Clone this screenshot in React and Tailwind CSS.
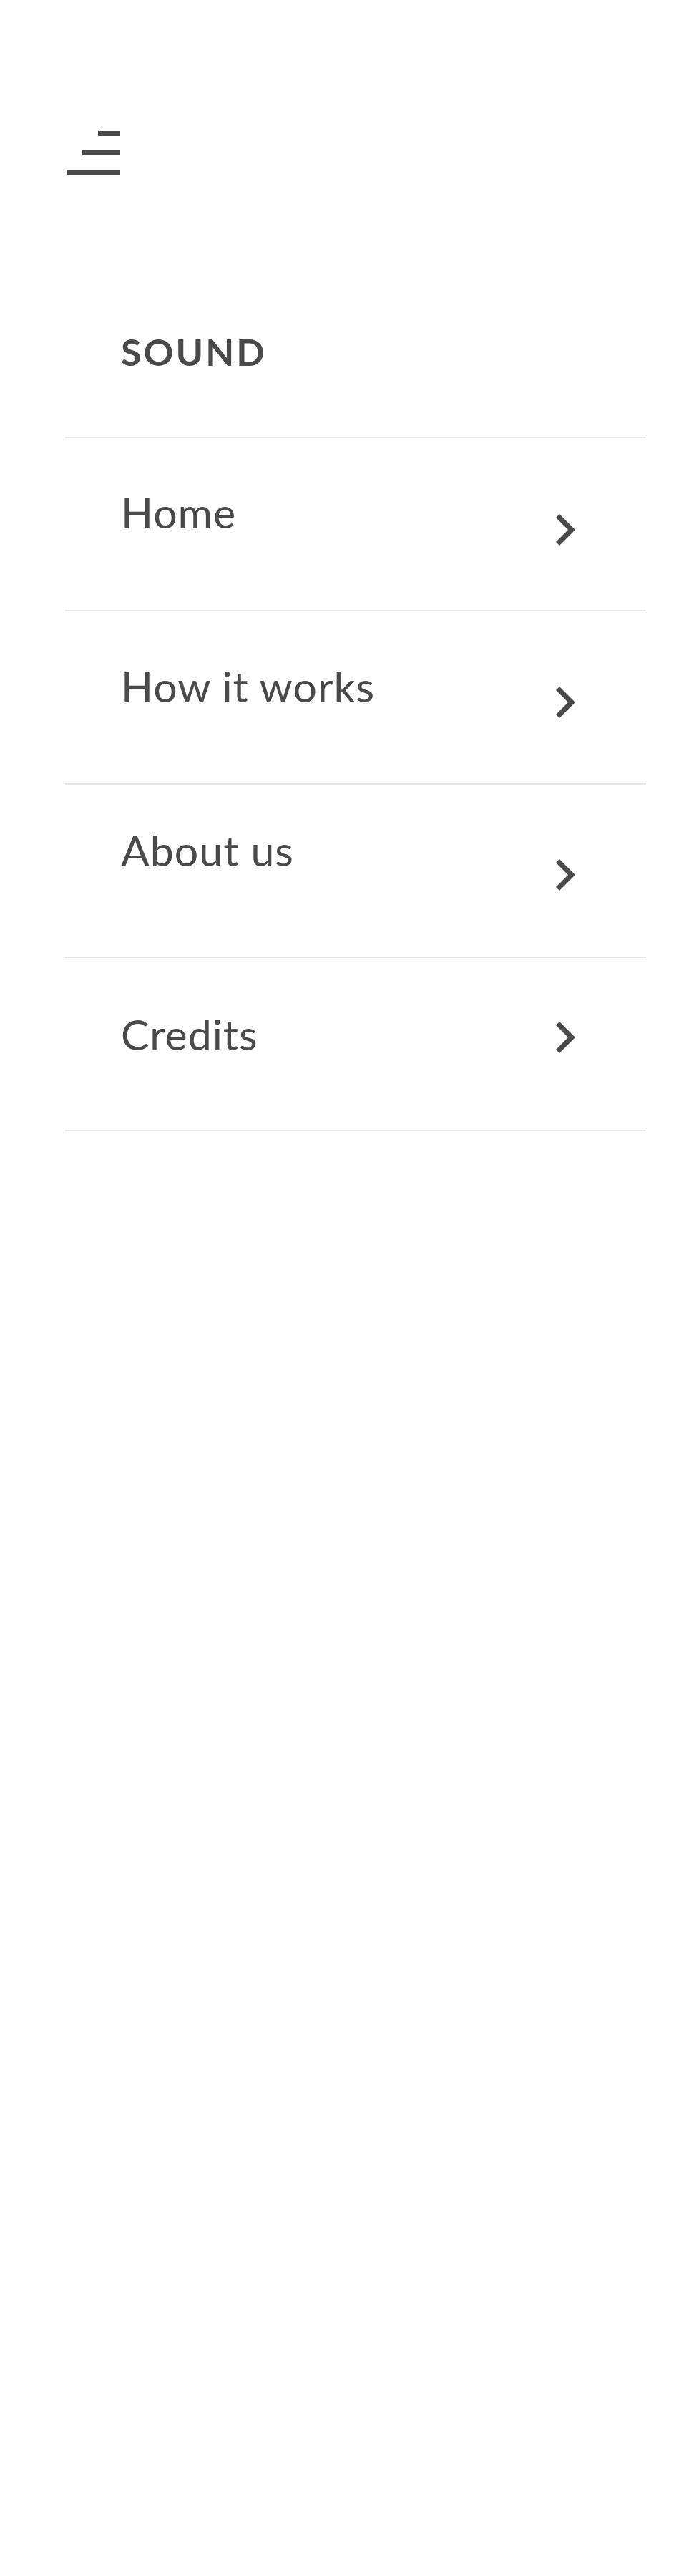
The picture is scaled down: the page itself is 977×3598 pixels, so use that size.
import React from 'react';

const items = [
  { label: 'Home', textPad: 'pt-[74px]', chevPad: 'mt-[106px]' },
  { label: 'How it works', textPad: 'pt-[75px]', chevPad: 'mt-[105px]' },
  { label: 'About us', textPad: 'pt-[62px]', chevPad: 'mt-[104px]' },
  { label: 'Credits', textPad: 'pt-[77px]', chevPad: 'mt-[89px]' },
];

const Chevron = ({ className }) => (
  <svg className={className} width="28" height="44" viewBox="0 0 28 44" fill="none" aria-hidden="true">
    <polyline points="2.5,2.5 22,22 2.5,41.5" stroke="#4a4a4a" strokeWidth="7" strokeLinejoin="miter" strokeLinecap="butt" />
  </svg>
);

const MenuButton = () => (
  <button type="button" className="flex w-[77px] flex-col items-end gap-[20px]" aria-label="Menu">
    <span className="block h-[7px] w-[31px] bg-[#4a4a4a]" />
    <span className="block h-[7px] w-[53px] bg-[#4a4a4a]" />
    <span className="block h-[7px] w-[75px] bg-[#4a4a4a]" />
  </button>
);

export default function App() {
  return (
    <div className="min-h-[3598px] bg-white font-['Lato',sans-serif] text-[#4a4a4a]">
      <div className="w-[812px] ml-[91px] pt-[183px]">
        <MenuButton />

        <h2 className="mt-[221px] pl-[78px] text-[52px] font-bold leading-none tracking-[3px]">SOUND</h2>

        <ul className="mt-[93px] border-b-2 border-[#e6e6e6]">
          {items.map((item) => (
            <li key={item.label} className="flex h-[242px] border-t-2 border-[#e6e6e6]">
              <a href="#" className={`pl-[78px] ${item.textPad} text-[59px] leading-none tracking-[1px]`}>
                {item.label}
              </a>
              <Chevron className={`ml-auto mr-[98px] shrink-0 ${item.chevPad}`} />
            </li>
          ))}
        </ul>
      </div>
    </div>
  );
}
